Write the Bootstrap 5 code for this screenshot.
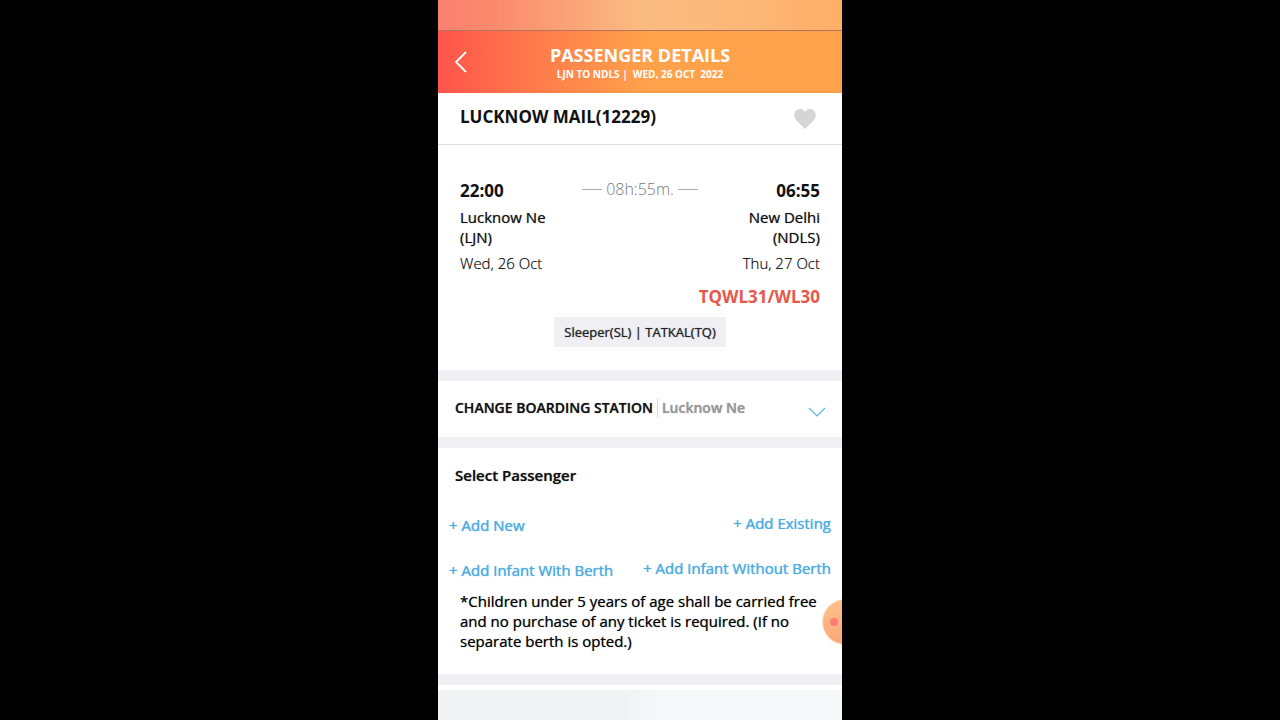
<!DOCTYPE html>
<html lang="en">
<head>
<meta charset="utf-8">
<meta name="viewport" content="width=device-width, initial-scale=1">
<title>Passenger Details</title>
<link href="https://cdn.jsdelivr.net/npm/bootstrap@5.3.0/dist/css/bootstrap.min.css" rel="stylesheet">
<style>
body { font-family: "Open Sans", "Noto Sans", sans-serif; font-size: 15px; line-height: 20px; color: #111; }
/* Open Sans has no 500 weight here: a faint glow thickens the regular cut */
.text-medium { text-shadow: 0 0 1px rgba(0, 0, 0, .6); }
.phone { max-width: 404px; min-height: 100vh; }
.status-strip { height: 30px; background: linear-gradient(90deg, #fb8070, #fb8a6d 14%, #fabb82 50%, #fcb878 75%, #fdae67); }
.app-header { height: 63px; padding: 0 16px; border-top: 1px solid #b5745a; background: linear-gradient(90deg, #ff544b, #ff754a 20%, #ffa24b 52%, #ffa24b); }
.screen-title { font-size: 18px; line-height: 22px; }
.header-text { padding: 2px 14px 0 0; }
.trip-line { font-size: 10px; line-height: 16px; white-space: pre; }
.back-btn { width: 14px; }
.train-bar { height: 52px; padding: 0 26px 3px 22px; border-bottom: 1px solid #ddd; }
.train-name, .clock, .waitlist { font-size: 17px; line-height: 24px; }
.journey { padding: 34px 22px 23px; }
.duration { font-size: 16px; font-weight: 300; color: #777; }
.rule-dash { width: 20px; height: 1px; background: #aaa; }
.travel-date { margin-top: 6px; font-weight: 300; color: #000; text-shadow: 0 0 1px rgba(0, 0, 0, .4); }
.waitlist { color: #e8574c; }
.class-tag { padding: 5px 10px; font-size: 13px; background: #efeff4; color: #222; }
.section-gap { height: 11px; background: #efeff4; }
.boarding { height: 56px; padding: 0 16px 3px 17px; font-size: 14px; }
.station { border-left: 1px solid #ddd; color: #999; text-shadow: 0 0 1px currentColor; }
.passengers { padding: 17px 11px 23px; }
.section-title { font-size: 15px; line-height: 20px; padding-left: 6px; }
.add-row { margin-top: 28px; }
.infant-row { margin-top: 23px; }
.add-link { color: #4fabe0; text-decoration: none; text-shadow: 0 0 1px currentColor; }
.left-link { padding-top: 2px; }
.note { padding: 0 11px; margin: 11px 0 0; color: #000; }
.foot-strip { min-height: 30px; margin-top: 5px; background: linear-gradient(90deg, #f1f3f4, #f0f2f3 45%, #f6f8f9 55%, #f6f9fa); }
.float-btn { top: 599px; right: -26px; width: 46px; height: 46px; padding: 0 0 0 7px; border: 1px solid #fbe3cf; background: linear-gradient(#fdc088, #fba877); }
.float-dot { width: 8px; height: 8px; background: #ff7b78; }
</style>
</head>
<body class="bg-black">
<main class="phone position-relative mx-auto bg-white d-flex flex-column overflow-hidden">
  <div class="status-strip"></div>
  <header class="app-header d-flex align-items-center text-white">
    <button type="button" class="back-btn btn p-0 border-0 d-flex" aria-label="Back">
      <svg width="14" height="24" viewBox="0 0 14 24" fill="none" stroke="#fff" stroke-width="1.800"><path d="M12 2 2 12 12 22"/></svg>
    </button>
    <div class="header-text flex-grow-1 text-center">
      <h1 class="screen-title fw-bold m-0">PASSENGER DETAILS</h1>
      <div class="trip-line fw-bold">LJN TO NDLS |  WED, 26 OCT  2022</div>
    </div>
  </header>
  <section class="train-bar d-flex align-items-center justify-content-between">
    <h2 class="train-name fw-bold m-0">LUCKNOW MAIL(12229)</h2>
    <button type="button" class="btn p-0 border-0 d-flex mt-1" aria-label="Favourite">
      <svg width="22" height="20" viewBox="0 0 22 20" fill="#d5d5d5"><path d="M11 20 3 12C-1 8 0 3 2.500 1.200 5.500-.8 9.500 0 11 3 12.500 0 16.500-.8 19.500 1.200 22 3 23 8 19 12Z"/></svg>
    </button>
  </section>
  <section class="journey">
    <div class="d-flex justify-content-between align-items-start">
      <div class="clock fw-bold">22:00</div>
      <div class="duration d-flex align-items-center gap-1"><span class="rule-dash"></span>08h:55m.<span class="rule-dash"></span></div>
      <div class="clock fw-bold">06:55</div>
    </div>
    <div class="d-flex justify-content-between text-medium mt-1">
      <div>Lucknow Ne<br>(LJN)</div>
      <div class="text-end">New Delhi<br>(NDLS)</div>
    </div>
    <div class="travel-date d-flex justify-content-between">
      <div>Wed, 26 Oct</div>
      <div>Thu, 27 Oct</div>
    </div>
    <div class="waitlist fw-bold text-end mt-2 pt-1">TQWL31/WL30</div>
    <div class="d-flex justify-content-center mt-2"><span class="class-tag text-medium">Sleeper(SL) | TATKAL(TQ)</span></div>
  </section>
  <div class="section-gap"></div>
  <section class="boarding d-flex align-items-center fw-semibold">
    <span class="text-medium">CHANGE BOARDING STATION</span>
    <span class="station ms-1 ps-1">Lucknow Ne</span>
    <button type="button" class="btn p-0 border-0 d-flex ms-auto mt-2" aria-label="Choose boarding station">
      <svg width="18" height="10" viewBox="0 0 18 10" fill="none" stroke="#5db3e4" stroke-width="1.200"><path d="m1 1 8 8 8-8"/></svg>
    </button>
  </section>
  <div class="section-gap"></div>
  <section class="passengers">
    <h2 class="section-title text-medium fw-semibold m-0">Select Passenger</h2>
    <div class="add-row d-flex justify-content-between">
      <a href="#" class="add-link left-link">+ Add New</a>
      <a href="#" class="add-link">+ Add Existing</a>
    </div>
    <div class="infant-row d-flex justify-content-between">
      <a href="#" class="add-link left-link">+ Add Infant With Berth</a>
      <a href="#" class="add-link">+ Add Infant Without Berth</a>
    </div>
    <p class="note text-medium">*Children under 5 years of age shall be carried free and no purchase of any ticket is required. (If no separate berth is opted.)</p>
  </section>
  <div class="section-gap"></div>
  <div class="foot-strip flex-grow-1"></div>
  <button type="button" class="float-btn btn rounded-circle position-absolute d-flex align-items-center" aria-label="Assistant"><span class="float-dot rounded-circle"></span></button>
</main>
</body>
</html>
